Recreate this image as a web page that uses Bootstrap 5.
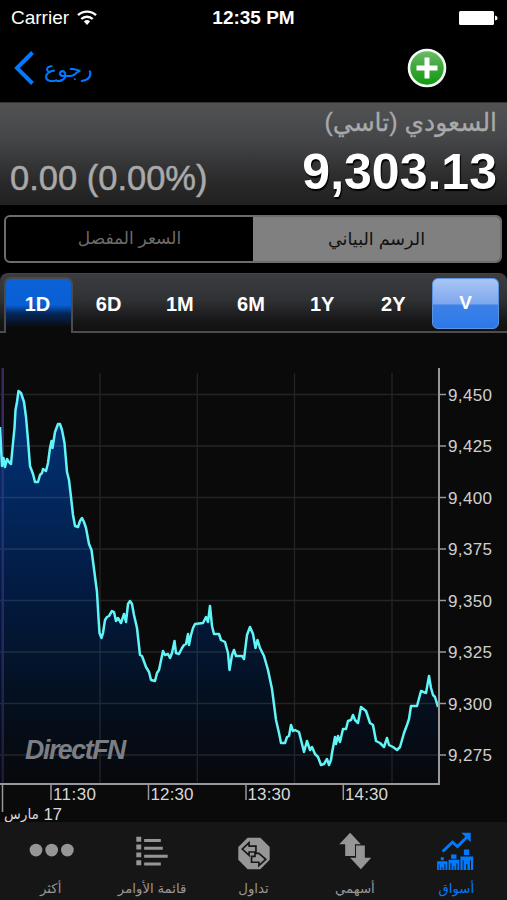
<!DOCTYPE html>
<html lang="ar">
<head>
<meta charset="utf-8">
<meta name="viewport" content="width=device-width, initial-scale=1">
<title>السعودي (تاسي)</title>
<link href="https://cdn.jsdelivr.net/npm/bootstrap@5.3.0/dist/css/bootstrap.min.css" rel="stylesheet">
<style>
body{background:#000;color:#fff;font-family:"Liberation Sans",Arial,"DejaVu Sans",sans-serif;width:507px;height:900px;overflow:hidden}
.status{height:36px;font-size:19px;line-height:36px}
.status-side{width:170px}
.carrier{margin-left:3px}
.nav-top{height:66px;color:#007aff;padding:0 60px 2px 13px}
.back-txt{font-size:22px;line-height:30px;margin-left:9px;padding-top:4px}
.quote{height:103px;background:linear-gradient(#505254 0,#454648 35%,#2b2b2c 75%,#202021 100%);border-top:1px solid #333;color:#a9a9aa;padding:0 10px}
.quote-name{height:38px;font-size:25px;line-height:38px;-webkit-text-stroke:.3px #a9a9aa}
.quote-chg{font-size:34.5px;line-height:40px;padding-top:17px;-webkit-text-stroke:.5px #a9a9aa}
.quote-last{font-size:50px;line-height:48px;padding-top:7px;color:#fff;text-shadow:1px 2px 1px #000}
.seg{height:48px;border:2px solid #6c6c6c;border-radius:6px;font-size:17px;overflow:hidden;margin:10px 5px 0 4px}
.seg-off{color:#6c6c6c}
.seg-on{background:#808080;color:#111;font-size:17.6px}
.ranges{height:60px;margin-top:10px;background:linear-gradient(#3b3d40 0,#303134 45%,#151516 85%,#111 100%);border-top:1px solid #444;border-bottom:2px solid #4d4d4d;border-radius:8px 8px 0 0;font-weight:700;font-size:20px}
.range{width:71.2px;height:59px;line-height:60px;text-align:center}
.range-on{width:69px;height:56px;line-height:50px;padding-right:2px;align-self:flex-end;margin:0 0 -2px 4px;border:2px solid #4b4b4d;border-bottom:0;border-radius:7px 7px 0 0;background:linear-gradient(#0b62d8 0,#0960d5 48%,#04275a 64%,#0a0a0a 90%)}
.range-vol{width:67px;height:51px;line-height:48px;margin:4px 8px 0 auto;border-radius:6px;border:1px solid #5b93e0;background:linear-gradient(#a9c5f3 0,#7ea8ee 50%,#3c81e6 54%,#2c78ea 100%);font-size:19px}
.chart{background:#0a0a0a;height:489px}
.chart svg,.tabs svg,.nav-top svg,.status svg{display:block}
.tabs{height:78px;background:#161616;color:#969696;font-size:13.3px}
.tab{width:101.4px;padding-top:3px}
.tab-label{line-height:26px;height:24px}
.tab-on{color:#007aff}
.fit{display:inline-block;white-space:nowrap}
</style>
</head>
<body>
<header>
  <div class="status d-flex justify-content-between">
    <div class="status-side d-flex align-items-center ps-2"><span class="carrier">Carrier</span>
      <svg class="ms-2" width="20" height="16" viewBox="0 0 20 16" fill="none" stroke="#fff" stroke-width="2.4"><path d="M1 5.2a13 13 0 0 1 18 0M4.3 9a8.3 8.3 0 0 1 11.4 0"/><path d="M6.9 11.4a4.5 4.5 0 0 1 6.2 0L10 15z" fill="#fff" stroke="none"/></svg>
    </div>
    <div class="fw-bold status-mid">12:35 PM</div>
    <div class="status-side d-flex align-items-center justify-content-end pe-2">
      <svg width="40" height="16" viewBox="0 0 40 16" fill="#fff"><rect x="0" y="1" width="35" height="14" rx="1.5"/><path d="M36 5.500q2.600.5 2.600 2.500T36 10.500z"/></svg>
    </div>
  </div>
  <nav class="nav-top d-flex align-items-center justify-content-between">
    <div class="d-flex align-items-center back-btn"><svg width="22" height="34" viewBox="0 0 22 34" fill="none" stroke="#007aff" stroke-width="4"><path d="M19.500 1.500 4 17 19.500 32.500"/></svg><span class="fit back-txt" dir="rtl">رجوع</span></div>
    <svg class="plus" width="40" height="40" viewBox="0 0 40 40"><defs><linearGradient id="pg" x2="0" y2="1"><stop stop-color="#70bd6c"/><stop offset=".5" stop-color="#3aa638"/><stop offset="1" stop-color="#0d9a0b"/></linearGradient></defs><circle cx="20" cy="20" r="18" fill="url(#pg)" stroke="#f4faf4" stroke-width="2.6"/><path d="M20 9.500v21M9.500 20h21" stroke="#fff" stroke-width="5"/></svg>
  </nav>
</header>
<section class="quote">
  <div class="quote-name text-end"><span class="fit name-txt" dir="rtl">السعودي (تاسي)</span></div>
  <div class="d-flex justify-content-between">
    <div class="quote-chg"><span class="fit">0.00 (0.00%)</span></div>
    <div class="quote-last fw-bold"><span class="fit">9,303.13</span></div>
  </div>
</section>
<div class="seg d-flex text-center">
  <div class="seg-off w-50 d-flex align-items-center justify-content-center"><span class="fit s1" dir="rtl">السعر المفصل</span></div>
  <div class="seg-on w-50 d-flex align-items-center justify-content-center"><span class="fit s2" dir="rtl">الرسم البياني</span></div>
</div>
<div class="ranges d-flex">
  <div class="range-on text-center">1D</div>
  <div class="range">6D</div><div class="range">1M</div><div class="range">6M</div><div class="range">1Y</div><div class="range">2Y</div>
  <div class="range-vol text-center">V</div>
</div>
<main class="chart">
<svg width="507" height="489" viewBox="0 333 507 489" font-family="Liberation Sans, Arial, DejaVu Sans, sans-serif">
  <defs>
    <linearGradient id="area" gradientUnits="userSpaceOnUse" x1="0" y1="390" x2="0" y2="784"><stop stop-color="#003479"/><stop offset=".25" stop-color="#022961"/><stop offset=".5" stop-color="#021b42"/><stop offset=".75" stop-color="#041123"/><stop offset="1" stop-color="#07080b"/></linearGradient>
    <linearGradient id="edge" x2="0" y2="1"><stop stop-color="#3a2858"/><stop offset=".3" stop-color="#26327c"/><stop offset=".7" stop-color="#24265e"/><stop offset="1" stop-color="#1c1a38"/></linearGradient>
  </defs>
  <path fill="url(#area)" d="M0 784V427L2 466 3.500 458 5 467 7 459 9 462 11 464 13 443 14.500 428 15.500 410 17 402 18.500 391 21 393 24 402 26 417 28 440 30 466 33 474 35 482 38 482 40 475 42 473 43 469 46 471 48 463 50 448 51.500 441 52.500 448 55 432 58 424 60 424 62 430 64.500 443 67 472 69 480 71 497 73 515 75 526 78 527 80 521 82 518 84 522 86 528 89 544 91.500 550 94 569 97 592 98.500 618 99.500 633 101.500 638 103 633 105 620 107 617 109 616 112 611 114 612 116 621 118 618 121 623 124 614 126 622 128 604 130 601 132 604 134 615 137 628 140 655 142 656 146 667 149 672 151 680 155 681 157 673 159 670 163 651 165 655 168 654 170 658 172 653 174.500 641 176 653 179 654 182 648 184 645 186 644 188 634 189 645 191 635 193 628 195 624 203 623 206 617 208 622 210 606 212 626 214 634 219 634 221 640 225 642 228 653 229.500 670 232 655 234 650 236 656 242 656 244 659 247 635 250 627 253 634 255.500 648 257.500 640 260 648 264 656 268 670 272 689 276 720 279 733 281 743 285 743 287 737 289 736 291 725 293 731 295 730 299 732 304 752 307 741 310 750 312 747 315 754 318 757 321 765 324 764 327 759 329 765 331 760 332 753 335 737 336 744 338 736 340 742 343 729 346 729 348 721 351 720 353 715 355 720 358 723 361 707 366 711 370 723 373 725 376 741 380 743 384 747 387 738 389 745 393 747 397 750 400 747 404 733 407 725 409 719 411 706 417 706 421 691 426 693 429 676 431 688 433 695 435 697 438 707V784Z"/>
  <path stroke="#fff" stroke-opacity=".11" stroke-width="1.300" d="M0 394.500H438M0 446H438M0 497.500H438M0 549H438M0 600.500H438M0 652H438M0 703.500H438M0 755H438M100 373V784M197.300 373V784M294.500 373V784M392 373V784"/>
  <rect x="1.500" y="368" width="2.500" height="416" fill="url(#edge)"/>
  <path fill="none" stroke="#62f5f8" stroke-width="2.500" stroke-linejoin="round" d="M0 427L2 466 3.500 458 5 467 7 459 9 462 11 464 13 443 14.500 428 15.500 410 17 402 18.500 391 21 393 24 402 26 417 28 440 30 466 33 474 35 482 38 482 40 475 42 473 43 469 46 471 48 463 50 448 51.500 441 52.500 448 55 432 58 424 60 424 62 430 64.500 443 67 472 69 480 71 497 73 515 75 526 78 527 80 521 82 518 84 522 86 528 89 544 91.500 550 94 569 97 592 98.500 618 99.500 633 101.500 638 103 633 105 620 107 617 109 616 112 611 114 612 116 621 118 618 121 623 124 614 126 622 128 604 130 601 132 604 134 615 137 628 140 655 142 656 146 667 149 672 151 680 155 681 157 673 159 670 163 651 165 655 168 654 170 658 172 653 174.500 641 176 653 179 654 182 648 184 645 186 644 188 634 189 645 191 635 193 628 195 624 203 623 206 617 208 622 210 606 212 626 214 634 219 634 221 640 225 642 228 653 229.500 670 232 655 234 650 236 656 242 656 244 659 247 635 250 627 253 634 255.500 648 257.500 640 260 648 264 656 268 670 272 689 276 720 279 733 281 743 285 743 287 737 289 736 291 725 293 731 295 730 299 732 304 752 307 741 310 750 312 747 315 754 318 757 321 765 324 764 327 759 329 765 331 760 332 753 335 737 336 744 338 736 340 742 343 729 346 729 348 721 351 720 353 715 355 720 358 723 361 707 366 711 370 723 373 725 376 741 380 743 384 747 387 738 389 745 393 747 397 750 400 747 404 733 407 725 409 719 411 706 417 706 421 691 426 693 429 676 431 688 433 695 435 697 438 707"/>
  <g stroke="#98989c" fill="none"><path stroke-width="2" d="M439 368V784M0 784H440"/><path stroke-width="1.500" d="M439 394.500h7M439 446h7M439 497.500h7M439 549h7M439 600.500h7M439 652h7M439 703.500h7M439 755h7M51 784V800M148.500 784V800M246 784V800M343.300 784V800M2.500 784V812"/></g>
  <g fill="#cfcfcf" font-size="17"><text x="448" y="400.500" textLength="44">9,450</text><text x="448" y="452" textLength="44">9,425</text><text x="448" y="503.500" textLength="44">9,400</text><text x="448" y="555" textLength="44">9,375</text><text x="448" y="606.500" textLength="44">9,350</text><text x="448" y="658" textLength="44">9,325</text><text x="448" y="709.500" textLength="44">9,300</text><text x="448" y="761" textLength="44">9,275</text></g>
  <g fill="#d8d8d8" font-size="17"><text x="53" y="800" textLength="43">11:30</text><text x="150.500" y="800" textLength="43">12:30</text><text x="247.500" y="800" textLength="43">13:30</text><text x="345" y="800" textLength="43">14:30</text><text x="43.500" y="819.500" textLength="18.500">17</text><text x="4" y="819" font-size="14" textLength="35" lengthAdjust="spacingAndGlyphs">مارس</text></g>
  <text x="25" y="759" font-size="28" font-weight="700" font-style="italic" fill="#7c7e84" letter-spacing="-1.500" textLength="100" lengthAdjust="spacingAndGlyphs">DirectFN</text>
</svg>
</main>
<footer class="tabs d-flex">
  <div class="tab d-flex flex-column align-items-center"><svg width="50" height="52" viewBox="0 0 50 52" fill="currentColor"><circle cx="9.700" cy="25.500" r="6.500"/><circle cx="25.700" cy="25.500" r="6.500"/><circle cx="41.700" cy="25.500" r="6.500"/></svg><span class="tab-label fit t1">أكثر</span></div>
  <div class="tab d-flex flex-column align-items-center"><svg width="50" height="52" viewBox="0 0 50 52" fill="currentColor"><path d="M9 12h5v5H9zM9 20h5v5H9zM9 28h5v5H9zM9 36h5v5H9zM17 14.300h17v3H17zM17 22.300h19v3H17zM17 30.300h24v3H17zM17 38.300h17v3H17z"/></svg><span class="tab-label fit t2">قائمة الأوامر</span></div>
  <div class="tab d-flex flex-column align-items-center"><svg width="50" height="52" viewBox="0 0 50 52"><path fill="currentColor" d="M19.500 13h13l9.500 9.500v13L32.500 45h-13L10 35.500v-13z"/><path fill="none" stroke="#161616" stroke-width="1.700" d="M14 24.500 21 18v3.500h7v6h-7V31zM38 35l-7 6.500V38h-7.500v-6h3.500v-3h4z"/></svg><span class="tab-label fit t3">تداول</span></div>
  <div class="tab d-flex flex-column align-items-center"><svg width="50" height="52" viewBox="0 0 50 52" fill="currentColor"><path d="M20 8 31 19.500H25V31.500H15V19.500H9zM26 21H35V33.500H41.500L31 45 20 33.500H26z"/></svg><span class="tab-label fit t4">أسهمي</span></div>
  <div class="tab tab-on d-flex flex-column align-items-center"><svg width="50" height="52" viewBox="0 0 50 52" fill="currentColor"><path d="M11.400 27 21.400 17.500 26.500 22 36 12.500" fill="none" stroke="currentColor" stroke-width="3"/><path d="M30.500 8H40V17.500zM9.500 33h3v3h-3zM20 30h5.500v4.500H20zM33 25h5.500v5.500H33zM5.700 37h10.500v9h-2v-6h-1v6h-2v-3h-1v3h-2v-6h-.7v6H5.700zM17.400 35.500h11V46h-2v-7h-1v7h-2v-4h-1v4h-2v-7h-1v7h-2zM29.500 32h13v14h-2.300V36h-1v10h-2.600v-6h-1.200v6h-2.600V36h-1v10h-2.300z"/></svg><span class="tab-label fit t5">أسواق</span></div>
</footer>
<script src="https://cdn.jsdelivr.net/npm/bootstrap@5.3.0/dist/js/bootstrap.bundle.min.js"></script>
</body>
</html>
